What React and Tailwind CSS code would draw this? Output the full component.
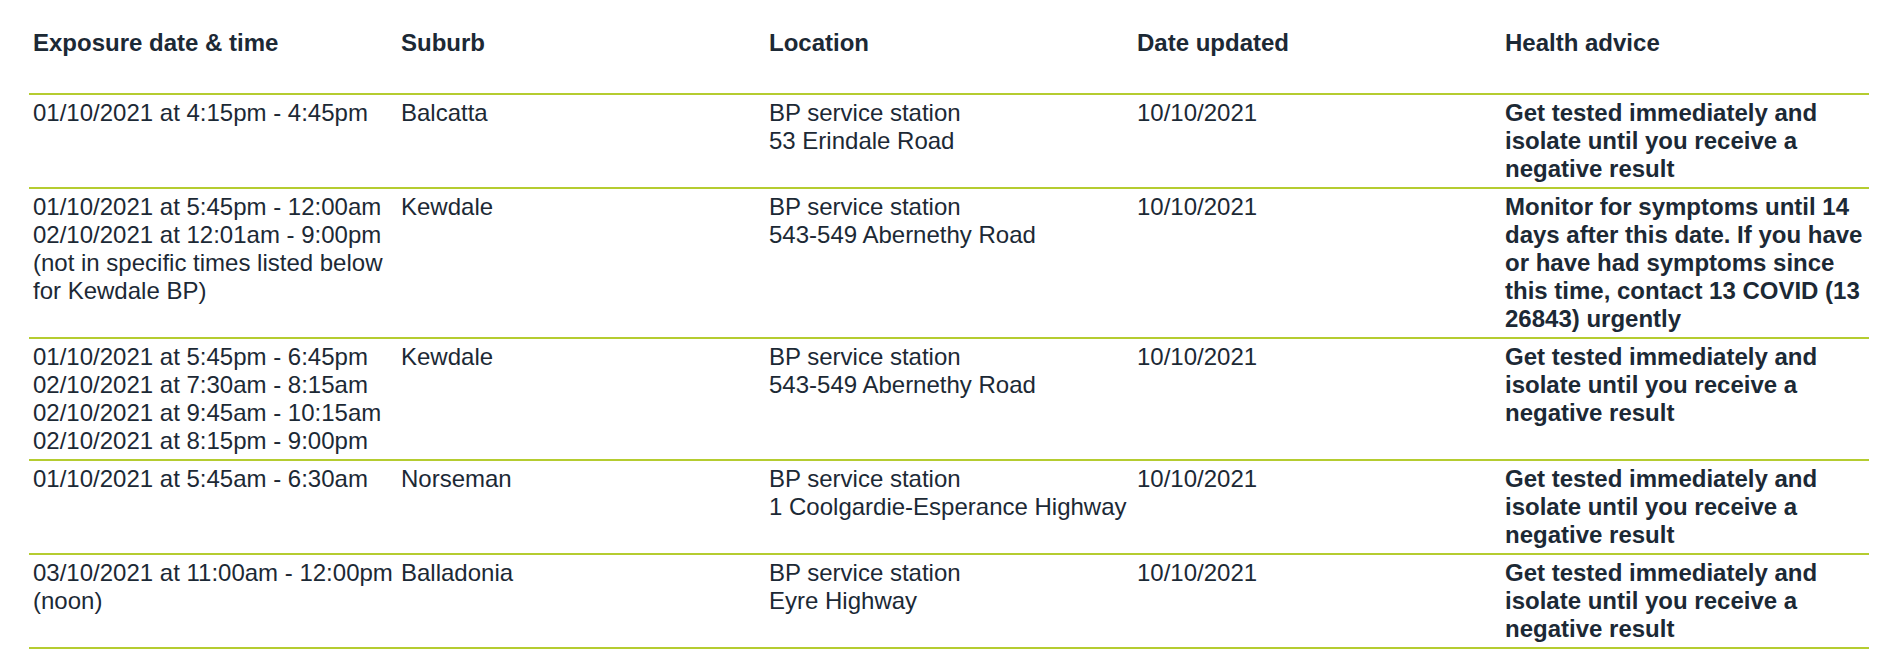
const rows = [
  {
    date: ["01/10/2021 at 4:15pm - 4:45pm"],
    suburb: "Balcatta",
    location: ["BP service station", "53 Erindale Road"],
    updated: "10/10/2021",
    advice: "Get tested immediately and isolate until you receive a negative result",
  },
  {
    date: [
      "01/10/2021 at 5:45pm - 12:00am",
      "02/10/2021 at 12:01am - 9:00pm",
      "(not in specific times listed below for Kewdale BP)",
    ],
    suburb: "Kewdale",
    location: ["BP service station", "543-549 Abernethy Road"],
    updated: "10/10/2021",
    advice:
      "Monitor for symptoms until 14 days after this date. If you have or have had symptoms since this time, contact 13 COVID (13 26843) urgently",
  },
  {
    date: [
      "01/10/2021 at 5:45pm - 6:45pm",
      "02/10/2021 at 7:30am - 8:15am",
      "02/10/2021 at 9:45am - 10:15am",
      "02/10/2021 at 8:15pm - 9:00pm",
    ],
    suburb: "Kewdale",
    location: ["BP service station", "543-549 Abernethy Road"],
    updated: "10/10/2021",
    advice: "Get tested immediately and isolate until you receive a negative result",
  },
  {
    date: ["01/10/2021 at 5:45am - 6:30am"],
    suburb: "Norseman",
    location: ["BP service station", "1 Coolgardie-Esperance Highway"],
    updated: "10/10/2021",
    advice: "Get tested immediately and isolate until you receive a negative result",
  },
  {
    date: ["03/10/2021 at 11:00am - 12:00pm", "(noon)"],
    suburb: "Balladonia",
    location: ["BP service station", "Eyre Highway"],
    updated: "10/10/2021",
    advice: "Get tested immediately and isolate until you receive a negative result",
  },
];

const headers = ["Exposure date & time", "Suburb", "Location", "Date updated", "Health advice"];

export default function App() {
  return (
    <div className="min-h-screen bg-white pl-[29px] pr-[21px] font-['Liberation_Sans',Arial,sans-serif] text-[24px] leading-[28px] text-[#1c2935]">
      <table className="w-full table-fixed border-collapse">
        <thead>
          <tr className="border-b-2 border-[#b5cc30]">
            {headers.map((h) => (
              <th key={h} className="pl-1 pr-0 pt-[29px] pb-[36px] text-left align-top font-bold">
                {h}
              </th>
            ))}
          </tr>
        </thead>
        <tbody>
          {rows.map((r, i) => (
            <tr key={i} className="border-b-2 border-[#b5cc30]">
              <td className="pl-1 pr-0 py-1 align-top">
                {r.date.map((d) => (
                  <div key={d}>{d}</div>
                ))}
              </td>
              <td className="pl-1 pr-0 py-1 align-top">{r.suburb}</td>
              <td className="pl-1 pr-0 py-1 align-top">
                {r.location.map((l) => (
                  <div key={l}>{l}</div>
                ))}
              </td>
              <td className="pl-1 pr-0 py-1 align-top">{r.updated}</td>
              <td className="pl-1 pr-0 py-1 align-top font-bold">{r.advice}</td>
            </tr>
          ))}
        </tbody>
      </table>
    </div>
  );
}
